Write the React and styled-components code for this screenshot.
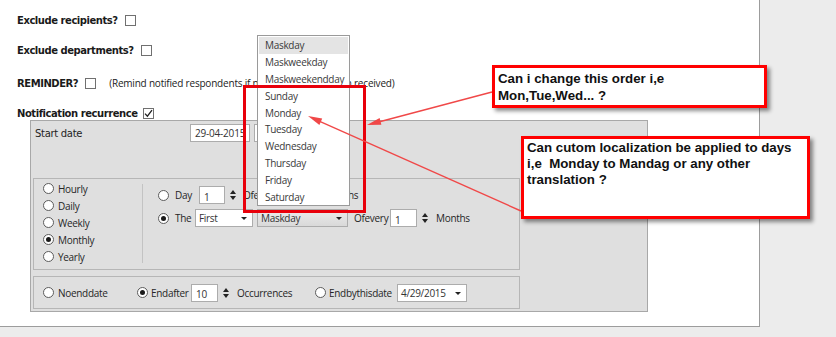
import React from "react";
import styled, { createGlobalStyle } from "styled-components";

const GlobalStyle = createGlobalStyle`
  html, body {
    margin: 0;
    padding: 0;
    background: #ececec;
  }
  * {
    box-sizing: border-box;
  }
`;

const Screen = styled.div`
  position: relative;
  width: 836px;
  height: 337px;
  overflow: hidden;
  background: #ececec;
`;

const Page = styled.div`
  width: 760px;
  height: 327px;
  background: #fff;
  border-right: 1px solid #9c9c9c;
  border-bottom: 1px solid #9c9c9c;
  display: flex;
  flex-direction: column;
`;

const Form = styled.div`
  display: flex;
  flex-direction: column;
  padding-left: 17px;
`;

const FieldRow = styled.div`
  display: flex;
  align-items: center;
  height: 14px;
  margin-top: ${(p) => p.$top}px;
`;

const FieldLabel = styled.span`
  font-family: "DejaVu Sans", Verdana, sans-serif;
  font-weight: bold;
  font-size: 10px;
  letter-spacing: -0.45px;
  color: #1a1a1a;
  white-space: nowrap;
`;

const CheckBox = styled.span`
  flex: none;
  display: inline-flex;
  align-items: center;
  justify-content: center;
  width: 11px;
  height: 11px;
  margin-left: ${(p) => p.$gap || 7}px;
  border: 1px solid #707070;
  background: #fff;
`;

const Hint = styled.span`
  margin-left: 13px;
  font-family: "Open Sans", sans-serif;
  font-size: 10px;
  letter-spacing: -0.2px;
  color: #222;
  white-space: nowrap;
`;

const Panel = styled.div`
  margin-left: 30px;
  width: 618px;
  height: 192px;
  background: #dfdfdf;
  border: 1px solid #a8a8a8;
  display: flex;
  flex-direction: column;
`;

const Text = styled.span`
  flex: none;
  display: inline-block;
  width: ${(p) => (p.$w ? `${p.$w}px` : "auto")};
  margin-left: ${(p) => p.$ml || 0}px;
  font-family: "Open Sans", sans-serif;
  font-size: 10px;
  letter-spacing: -0.3px;
  color: #262626;
  white-space: nowrap;
`;

const StartRow = styled.div`
  display: flex;
  align-items: center;
  height: 18px;
  margin-top: 3px;
  padding-left: 4px;
`;

const StartLabel = styled(Text)`
  font-family: "DejaVu Sans", Verdana, sans-serif;
  font-size: 10px;
  letter-spacing: -0.3px;
  color: #1e1e1e;
`;

const Input = styled.span`
  flex: none;
  display: inline-flex;
  align-items: center;
  width: ${(p) => p.$w}px;
  height: 18px;
  margin-left: ${(p) => p.$ml || 0}px;
  padding-left: 4px;
  background: #fff;
  border: 1px solid #acacac;
  font-family: "Open Sans", sans-serif;
  font-size: 10px;
  letter-spacing: -0.2px;
  color: #333;
  padding-top: ${(p) => (p.$low ? 3 : 0)}px;
`;

const Combo = styled.span`
  flex: none;
  position: relative;
  display: inline-flex;
  align-items: center;
  width: ${(p) => p.$w}px;
  height: 18px;
  margin-left: ${(p) => p.$ml || 0}px;
  padding-left: 3px;
  border: 1px solid #acacac;
  background: ${(p) =>
    p.$gray ? "linear-gradient(#ececec, #d9d9d9)" : "#fff"};
  font-family: "Open Sans", sans-serif;
  font-size: 10px;
  letter-spacing: -0.3px;
  color: #333;
  &::after {
    content: "";
    position: absolute;
    right: 5px;
    top: 7px;
    border-left: 3px solid transparent;
    border-right: 3px solid transparent;
    border-top: 3px solid #222;
  }
`;

const Spinner = styled.span`
  flex: none;
  position: relative;
  width: 7px;
  height: 12px;
  margin-left: ${(p) => p.$ml || 4}px;
  &::before,
  &::after {
    content: "";
    position: absolute;
    left: 0;
    border-left: 3px solid transparent;
    border-right: 3px solid transparent;
  }
  &::before {
    top: 1px;
    border-bottom: 4px solid #222;
  }
  &::after {
    bottom: 1px;
    border-top: 4px solid #222;
  }
`;

const Radio = styled.span`
  flex: none;
  display: inline-flex;
  align-items: center;
  justify-content: center;
  width: 11px;
  height: 11px;
  margin-left: ${(p) => p.$ml || 0}px;
  border-radius: 50%;
  border: 1px solid #5c5c5c;
  background: #fff;
  &::after {
    content: "";
    display: ${(p) => (p.$on ? "block" : "none")};
    width: 5px;
    height: 5px;
    border-radius: 50%;
    background: #1a1a1a;
  }
`;

const FreqBox = styled.div`
  display: flex;
  margin: 36px 0 0 2px;
  width: 487px;
  height: 92px;
  border: 1px solid #b6b6b6;
`;

const KindCol = styled.div`
  width: 108px;
  padding: 1px 0 0 9px;
  display: flex;
  flex-direction: column;
`;

const KindRow = styled.div`
  display: flex;
  align-items: center;
  height: 17px;
`;

const RuleCol = styled.div`
  flex: 1;
  margin: 5px 0 6px;
  padding: 2px 0 0 15px;
  border-left: 1px solid #c3c3c3;
  display: flex;
  flex-direction: column;
`;

const RuleRow = styled.div`
  display: flex;
  align-items: center;
  height: 18px;
  margin-top: ${(p) => p.$top || 0}px;
`;

const EndBox = styled.div`
  display: flex;
  align-items: center;
  margin: 6px 0 0 2px;
  width: 487px;
  height: 33px;
  padding-left: 9px;
  border: 1px solid #b6b6b6;
`;

const DropList = styled.div`
  position: absolute;
  left: 257px;
  top: 35px;
  width: 93px;
  height: 171px;
  padding: 1px;
  background: #fff;
  border: 1px solid #9a9a9a;
`;

const DropItem = styled.div`
  height: 16.9px;
  line-height: 16.9px;
  padding-left: 6px;
  font-family: "Open Sans", sans-serif;
  font-size: 10px;
  letter-spacing: -0.3px;
  color: #3a3a3a;
  background: ${(p) => (p.$active ? "#e4e4e4" : "transparent")};
`;

const RedFrame = styled.div`
  position: absolute;
  left: 243px;
  top: 85px;
  width: 123px;
  height: 128px;
  border: 3px solid #e8000b;
`;

const Arrows = styled.svg`
  position: absolute;
  left: 0;
  top: 0;
  pointer-events: none;
`;

const Callout = styled.div`
  position: absolute;
  left: ${(p) => p.$x}px;
  top: ${(p) => p.$y}px;
  width: ${(p) => p.$w}px;
  height: ${(p) => p.$h}px;
  padding: ${(p) => p.$pt}px 3px 0;
  background: #fff;
  border: 3px solid #f00;
  box-shadow: 3px 3px 4px rgba(0, 0, 0, 0.45);
  font-family: "Liberation Sans", Arial, sans-serif;
  font-weight: bold;
  font-size: 13.3px;
  line-height: ${(p) => p.$lh}px;
  color: #111;
  white-space: pre;
`;

const kinds = [
  ["Hourly", false],
  ["Daily", false],
  ["Weekly", false],
  ["Monthly", true],
  ["Yearly", false],
];

const days = [
  "Maskday",
  "Maskweekday",
  "Maskweekendday",
  "Sunday",
  "Monday",
  "Tuesday",
  "Wednesday",
  "Thursday",
  "Friday",
  "Saturday",
];

const Tick = () => (
  <svg width="9" height="9" viewBox="0 0 9 9">
    <path d="M1 4.6 L3.4 7.2 L8 1.2" fill="none" stroke="#222" strokeWidth="1.3" />
  </svg>
);

export default function App() {
  return (
    <Screen>
      <GlobalStyle />
      <Page>
        <Form>
          <FieldRow $top={13}>
            <FieldLabel>Exclude recipients?</FieldLabel>
            <CheckBox />
          </FieldRow>
          <FieldRow $top={16}>
            <FieldLabel>Exclude departments?</FieldLabel>
            <CheckBox />
          </FieldRow>
          <FieldRow $top={19}>
            <FieldLabel>REMINDER?</FieldLabel>
            <CheckBox />
            <Hint>(Remind notified respondents if no response has been received)</Hint>
          </FieldRow>
          <FieldRow $top={16}>
            <FieldLabel>Notification recurrence</FieldLabel>
            <CheckBox $gap={6}>
              <Tick />
            </CheckBox>
          </FieldRow>
        </Form>

        <Panel>
          <StartRow>
            <StartLabel $w={155}>Start date</StartLabel>
            <Input $w={60}>29-04-2015</Input>
            <Input $w={60} $ml={4} />
          </StartRow>

          <FreqBox>
            <KindCol>
              {kinds.map(([name, on]) => (
                <KindRow key={name}>
                  <Radio $on={on} />
                  <Text $ml={4}>{name}</Text>
                </KindRow>
              ))}
            </KindCol>
            <RuleCol>
              <RuleRow>
                <Radio />
                <Text $ml={6} $w={18}>Day</Text>
                <Input $w={26} $ml={6} $low>1</Input>
                <Spinner $ml={5} />
                <Text $ml={6}>Ofevery</Text>
                <Input $w={27} $ml={2} $low>1</Input>
                <Spinner $ml={5} />
                <Text $ml={6}>Months</Text>
              </RuleRow>
              <RuleRow $top={5}>
                <Radio $on />
                <Text $ml={6} $w={18}>The</Text>
                <Combo $w={58} $ml={2}>First</Combo>
                <Combo $w={91} $ml={4} $gray>Maskday</Combo>
                <Text $ml={6} $w={34}>Ofevery</Text>
                <Input $w={27} $ml={2} $low>1</Input>
                <Spinner $ml={5} />
                <Text $ml={7}>Months</Text>
              </RuleRow>
            </RuleCol>
          </FreqBox>

          <EndBox>
            <Radio />
            <Text $ml={4} $w={79}>Noenddate</Text>
            <Radio $on />
            <Text $ml={3} $w={40}>Endafter</Text>
            <Input $w={27} $low>10</Input>
            <Spinner $ml={5} />
            <Text $ml={7} $w={78}>Occurrences</Text>
            <Radio />
            <Text $ml={3} $w={68}>Endbythisdate</Text>
            <Combo $w={70}>4/29/2015</Combo>
          </EndBox>
        </Panel>
      </Page>

      <DropList>
        {days.map((d, i) => (
          <DropItem key={d} $active={i === 0}>
            {d}
          </DropItem>
        ))}
      </DropList>

      <RedFrame />

      <Arrows width="836" height="337" viewBox="0 0 836 337">
        <line x1="492" y1="92" x2="372" y2="123.7" stroke="#f04848" strokeWidth="1.4" />
        <polygon points="367,125 379.6,118 381.4,124.8" fill="#f04848" />
        <line x1="521" y1="211" x2="313" y2="118.3" stroke="#f04848" strokeWidth="1.4" />
        <polygon points="308,116 319.4,124.9 322.2,118.5" fill="#f04848" />
      </Arrows>

      <Callout $x={492} $y={65} $w={275} $h={43} $pt={2} $lh={17}>
        {"Can i change this order i,e\nMon,Tue,Wed... ?"}
      </Callout>
      <Callout $x={521} $y={136} $w={289} $h={83} $pt={1} $lh={16}>
        {"Can cutom localization be applied to days\ni,e  Monday to Mandag or any other\ntranslation ?"}
      </Callout>
    </Screen>
  );
}
